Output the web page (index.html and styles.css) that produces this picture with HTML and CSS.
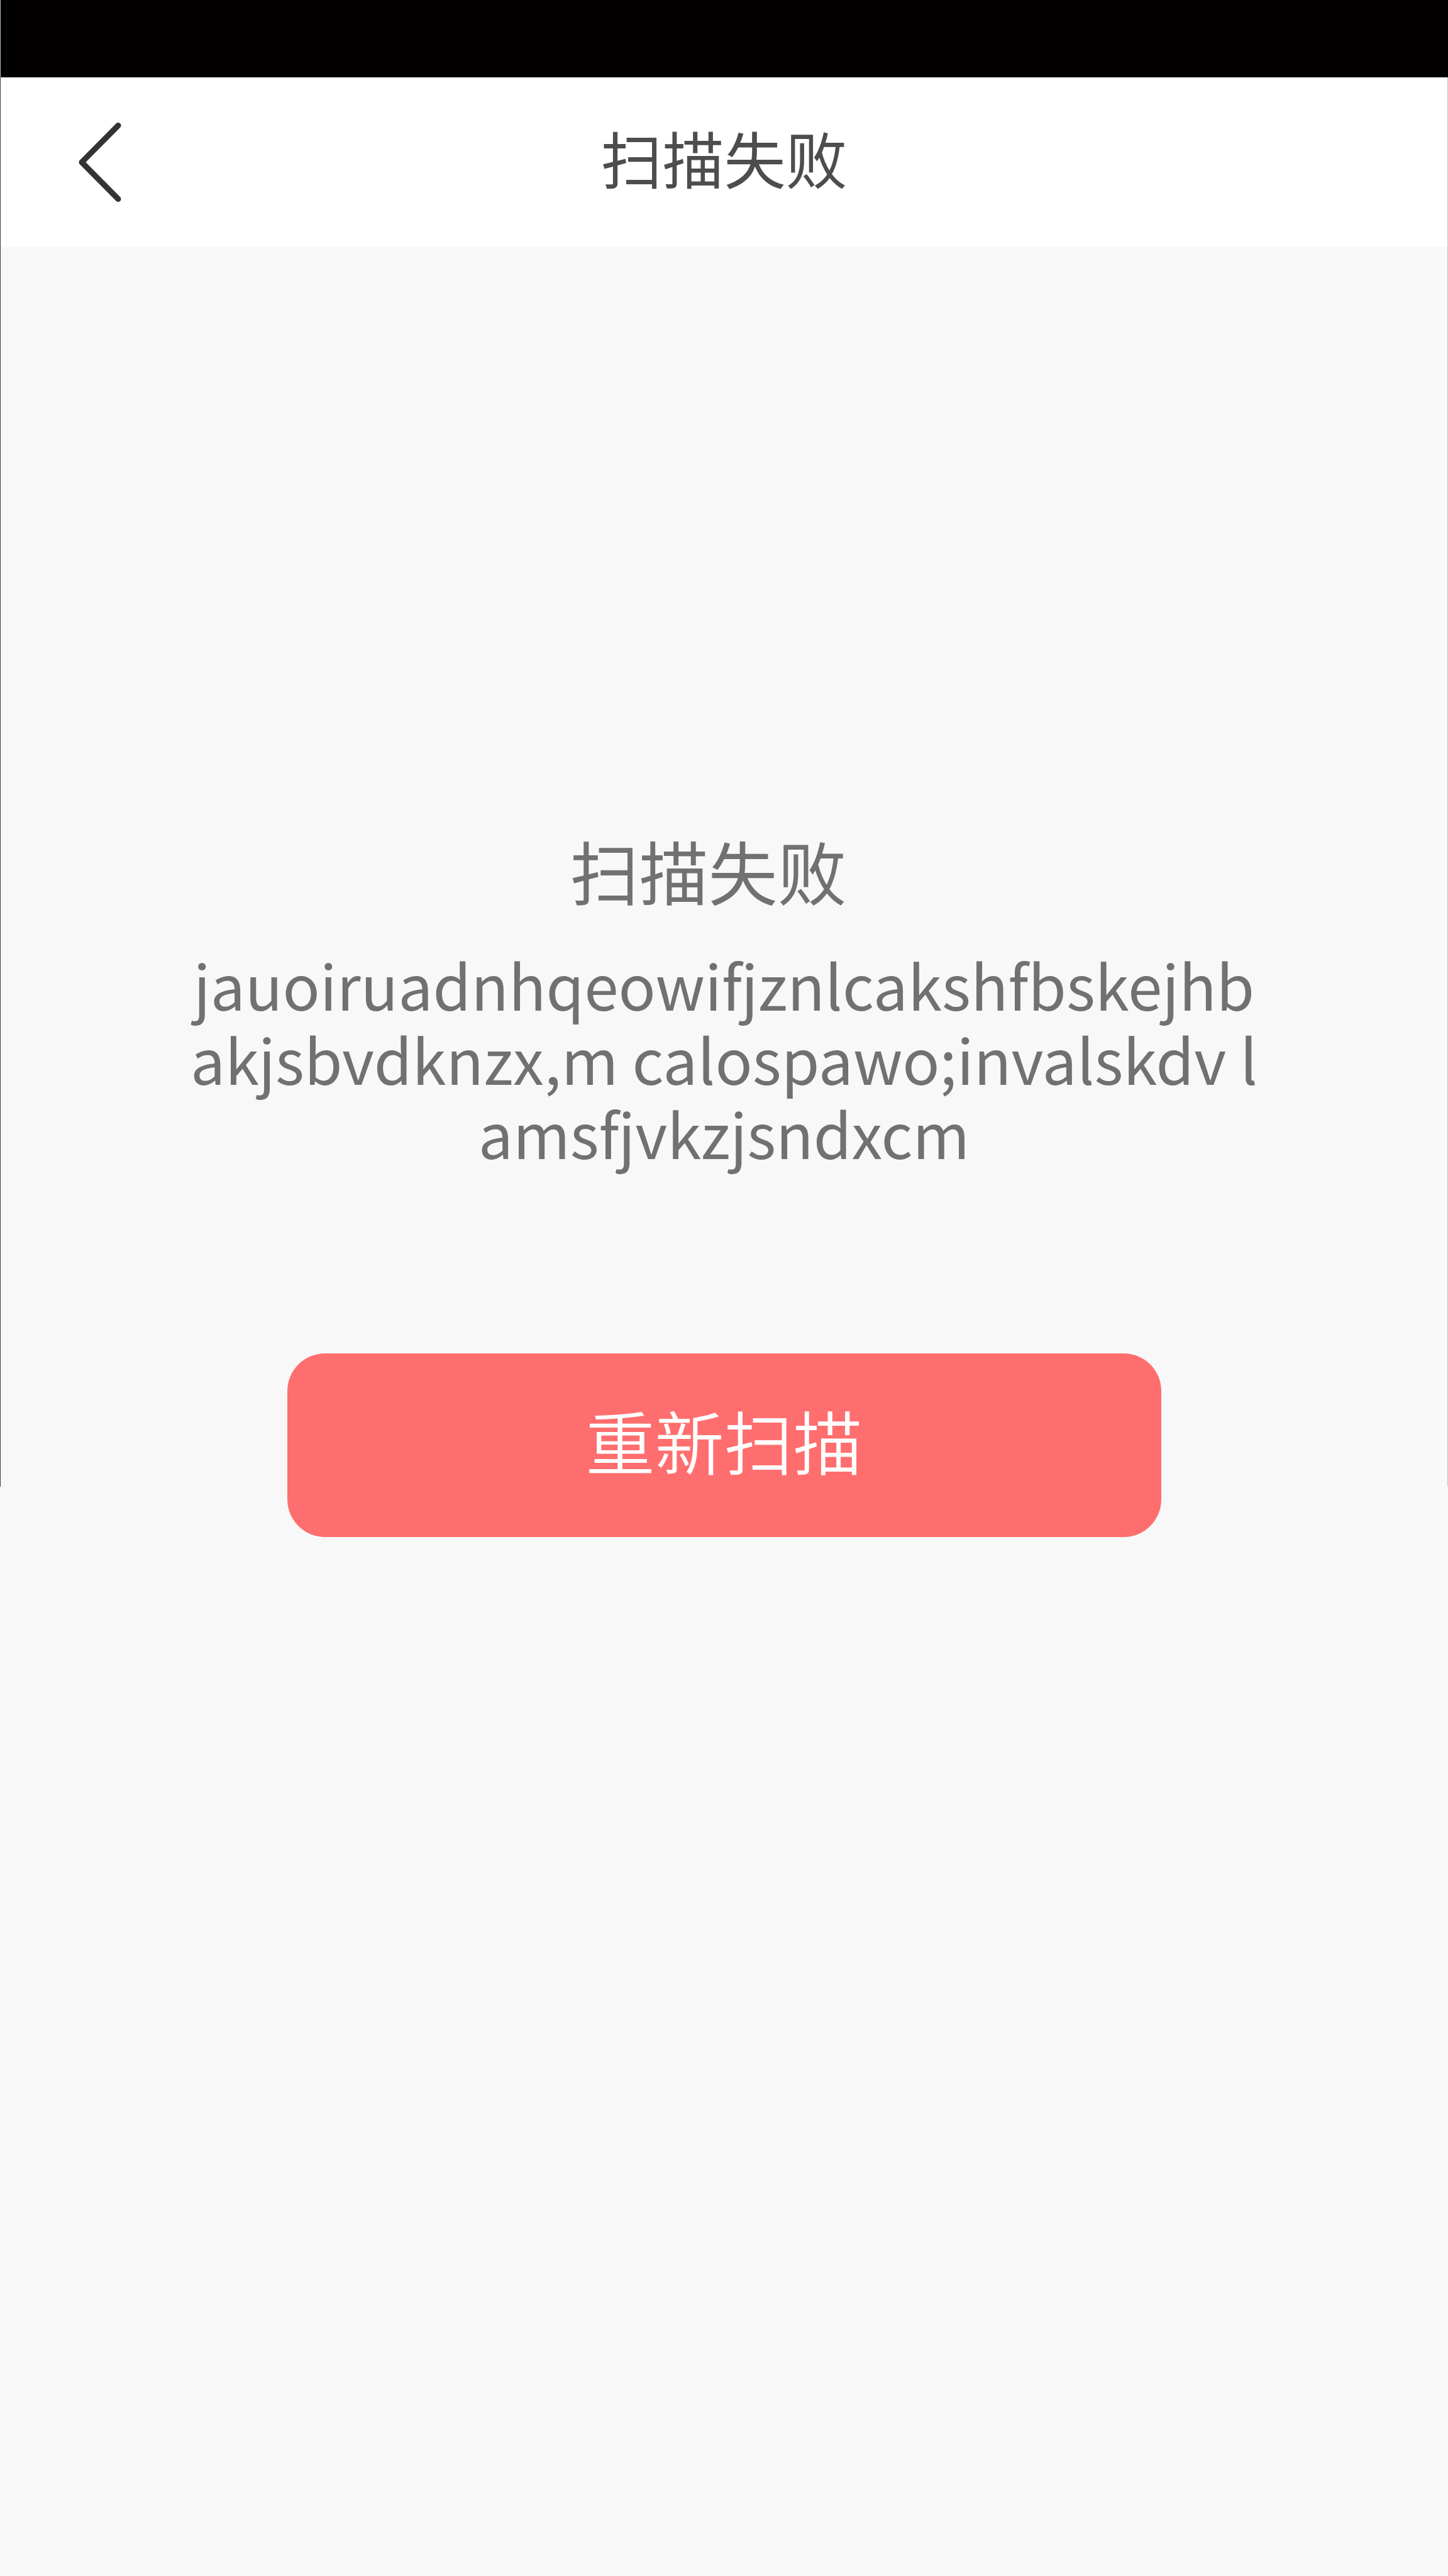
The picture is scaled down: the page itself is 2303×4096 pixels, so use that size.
FILE: index.html
```html
<!DOCTYPE html>
<html lang="zh-CN">
<head>
<meta charset="utf-8">
<meta name="viewport" content="width=device-width, initial-scale=1">
<title>扫描失败</title>
<link rel="stylesheet" href="styles.css">
</head>
<body>
<div class="status-bar"></div>
<header class="nav-bar">
  <button class="back" type="button" aria-label="返回">
    <svg class="back-icon" viewBox="0 0 68 128" aria-hidden="true">
      <path d="M63 5.5 5 64l58 58.5" fill="none" stroke="currentColor" stroke-width="9" stroke-linecap="round" stroke-linejoin="round"/>
    </svg>
  </button>
  <h1 class="nav-title">扫描失败</h1>
</header>
<main class="result">
  <h2 class="result-title">扫描失败</h2>
  <p class="result-message">jauoiruadnhqeowifjznlcakshfbskejhbakjsbvdknzx,m calospawo;invalskdv lamsfjvkzjsndxcm</p>
  <button class="retry" type="button">重新扫描</button>
</main>
</body>
</html>
```

FILE: styles.css
```css
* {
  box-sizing: border-box;
}

body {
  margin: 0;
  min-height: 100vh;
  display: flex;
  flex-direction: column;
  background: #f8f8f8;
  font-family: "Noto Sans CJK SC", sans-serif;
}

h1,
h2,
p {
  margin: 0;
  font-weight: 400;
}

button {
  border: 0;
  font-family: inherit;
  cursor: pointer;
}

.status-bar {
  height: 123px;
  background: #030001;
  border-left: 1px solid #bbbbbb;
}

.nav-bar {
  height: 270px;
  display: grid;
  grid-template-columns: 1fr auto 1fr;
  align-items: center;
  background: #ffffff;
  border-left: 1px solid #444444;
  border-right: 1px solid #c4c4c4;
}

.back {
  justify-self: start;
  display: flex;
  margin-left: 64px;
  padding: 40px 60px;
  background: none;
  color: #333333;
}

.back-icon {
  width: 68px;
  height: 128px;
}

.nav-title {
  padding-bottom: 18px;
  font-size: 98px;
  line-height: 118px;
  color: #4d4d4d;
}

/* Hairlines run down both edges of the upper part of the screen. */
.result {
  flex: 1;
  display: flex;
  flex-direction: column;
  align-items: center;
  padding-top: 935px;
  background:
    linear-gradient(#444444, #444444) left top / 1px 1971px no-repeat,
    linear-gradient(#c4c4c4, #c4c4c4) right top / 1px 1971px no-repeat;
}

.result-title {
  padding-right: 50px;
  font-size: 110px;
  line-height: 110px;
  color: #717171;
}

.result-message {
  width: 100%;
  max-width: 1712px;
  margin-top: 67px;
  font-size: 98px;
  line-height: 118px;
  text-align: center;
  word-break: break-all;
  color: #717171;
}

.retry {
  width: 100%;
  max-width: 1390px;
  height: 292px;
  margin-top: 293px;
  padding: 0 0 18px;
  border-radius: 60px;
  background: #ff6e6e;
  color: #ffffff;
  font-family: "Noto Sans CJK SC DemiLight", "Noto Sans CJK SC", sans-serif;
  font-size: 110px;
  font-weight: 350;
}
```
